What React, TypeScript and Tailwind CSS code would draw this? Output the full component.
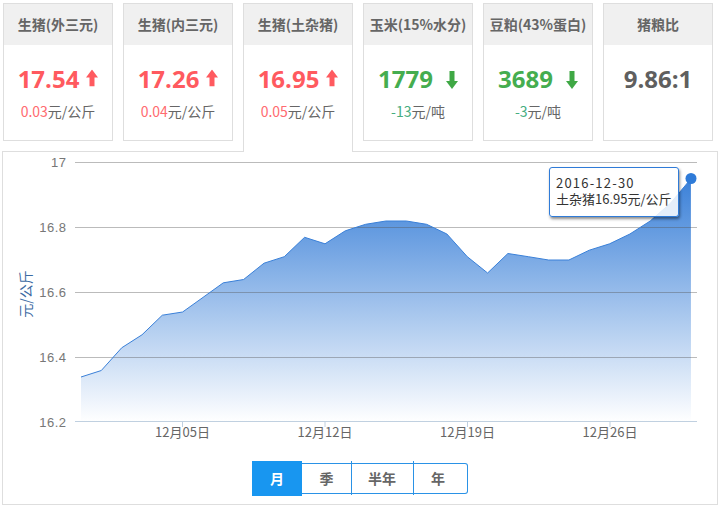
const FONT = "font-['Noto_Sans_CJK_SC','Open_Sans',sans-serif]";

const vals = [16.34,16.36,16.43,16.47,16.53,16.54,16.585,16.63,16.64,16.69,16.71,16.77,16.75,16.79,16.81,16.82,16.82,16.81,16.78,16.71,16.66,16.72,16.71,16.70,16.70,16.73,16.75,16.78,16.82,16.875,16.95];
const px = (i: number) => 81 + i * 20.33;
const py = (v: number) => 162.5 + (17 - v) * 325;
const pts = vals.map((v, i) => `${px(i).toFixed(1)},${py(v).toFixed(1)}`);
const linePath = "M" + pts.join("L");
const areaPath = linePath + `L691,422L81,422Z`;

type Card = { title: string; value: string; sub?: string; unit?: string; dir?: "up" | "down"; active?: boolean };
const cards: Card[] = [
  { title: "生猪(外三元)", value: "17.54", sub: "0.03", unit: "元/公斤", dir: "up" },
  { title: "生猪(内三元)", value: "17.26", sub: "0.04", unit: "元/公斤", dir: "up" },
  { title: "生猪(土杂猪)", value: "16.95", sub: "0.05", unit: "元/公斤", dir: "up", active: true },
  { title: "玉米(15%水分)", value: "1779", sub: "-13", unit: "元/吨", dir: "down" },
  { title: "豆粕(43%蛋白)", value: "3689", sub: "-3", unit: "元/吨", dir: "down" },
  { title: "猪粮比", value: "9.86:1" },
];

function Arrow({ dir }: { dir: "up" | "down" }) {
  return dir === "up" ? (
    <svg width="12" height="17" viewBox="0 0 12 17" className="block -translate-y-[1.5px]">
      <path d="M6 0L12 8H8.5V17H3.5V8H0Z" fill="#ff5a5f" />
    </svg>
  ) : (
    <svg width="12" height="18" viewBox="0 0 12 18" className="block translate-y-[1px]">
      <path d="M6 18L12 10H8.5V0H3.5V10H0Z" fill="#3fa845" />
    </svg>
  );
}

function StatCard({ c }: { c: Card }) {
  const color = c.dir === "up" ? "text-[#ff5a5f]" : c.dir === "down" ? "text-[#45ad4f]" : "text-[#5f5f5f]";
  const subColor = c.dir === "up" ? "text-[#ff6b70]" : "text-[#45ad7f]";
  return (
    <div
      className={`relative w-[110px] shrink-0 border border-[#dedede] bg-white ${
        c.active ? "z-10 h-[149px] border-b-0" : "h-[138px]"
      }`}
    >
      <div className="h-[41px] bg-[#f0f0f0] text-center text-[14px] leading-[41px] font-bold whitespace-nowrap text-[#666]">
        {c.title}
      </div>
      <div
        className={`mt-[16px] flex h-[36px] items-center justify-center text-[24px] leading-[36px] font-bold ${color} ${
          c.dir === "down" ? "gap-[13px]" : "gap-[7px]"
        }`}
      >
        <span className="font-['Open_Sans',sans-serif]">{c.value}</span>
        {c.dir && <Arrow dir={c.dir} />}
      </div>
      {c.sub && (
        <div className="mt-[4px] text-center text-[14px] leading-[20px] text-[#666]">
          <span className={subColor}>{c.sub}</span>
          {c.unit}
        </div>
      )}
    </div>
  );
}

const yTicks = [
  { l: "17", y: 162.5 },
  { l: "16.8", y: 227.5 },
  { l: "16.6", y: 292.5 },
  { l: "16.4", y: 357.5 },
];
const xTicks = [
  { l: "12月05日", x: 182.5 },
  { l: "12月12日", x: 325 },
  { l: "12月19日", x: 467.5 },
  { l: "12月26日", x: 610 },
];
const ranges = [
  { l: "月", w: "w-[50px]" },
  { l: "季", w: "w-[49px]" },
  { l: "半年", w: "w-[62px]" },
  { l: "年", w: "w-[55px]" },
];

export default function App() {
  return (
    <div className={`h-[511px] w-[724px] overflow-hidden bg-white pt-[3px] ${FONT}`}>
      <div className="flex h-[138px] items-start gap-[10px] pl-[3px]">
        {cards.map((c) => (
          <StatCard key={c.title} c={c} />
        ))}
      </div>
      <div className="relative mt-[10px] ml-[2px] h-[354px] w-[716px] border border-[#dedede] bg-white">
        <svg width="714" height="300" viewBox="3 152 714 300" className="block">
          <defs>
            <linearGradient id="area" x1="0" y1="178" x2="0" y2="422" gradientUnits="userSpaceOnUse">
              <stop offset="0" stopColor="#3a80d8" />
              <stop offset="1" stopColor="#ffffff" />
            </linearGradient>
          </defs>
          <path d={areaPath} fill="url(#area)" />
          {yTicks.map((t) => (
            <line key={t.l} x1="75" x2="697" y1={t.y} y2={t.y} stroke="#555" strokeOpacity="0.4" strokeWidth="1" />
          ))}
          <line x1="75" x2="697" y1="421.5" y2="421.5" stroke="#c0d0e0" strokeWidth="1" />
          {xTicks.map((t) => (
            <line key={t.l} x1={t.x} x2={t.x} y1="422" y2="427" stroke="#c0d0e0" strokeWidth="1" />
          ))}
          <path d={linePath} fill="none" stroke="#3a80d8" strokeWidth="1" />
          <circle cx="691" cy="178.5" r="5.5" fill="#2f7bd8" />
          {[...yTicks, { l: "16.2", y: 422 }].map((t) => (
            <text key={t.l} x="66.5" y={t.y + 4.5} textAnchor="end" fontSize="13" letterSpacing="0.5" fill="#777" fontFamily="'Liberation Sans',sans-serif">
              {t.l}
            </text>
          ))}
          {xTicks.map((t) => (
            <text key={t.l} x={t.x} y="437" textAnchor="middle" fontSize="13" fill="#666" fontFamily="'Noto Sans CJK SC',sans-serif">
              {t.l}
            </text>
          ))}
          <text
            transform="translate(31 294) rotate(-90)"
            textAnchor="middle"
            fontSize="14"
            fill="#3d6ba3"
            fontFamily="'Noto Sans CJK SC',sans-serif"
          >
            元/公斤
          </text>
        </svg>
        <div className="absolute top-[15px] left-[546px] h-[50px] w-[130px] rounded-[3px] border border-[#2f7bd8] bg-white/85 pt-[7px] pl-[6px] text-[13px] leading-[16px] whitespace-nowrap text-[#333] shadow-[1px_2px_3px_rgba(0,0,0,0.45)]">
          <div className="tracking-[1.2px]">2016-12-30</div>
          <div>土杂猪16.95元/公斤</div>
        </div>
        <div className="mt-[9px] ml-[249px] flex h-[35px] w-[216px] items-stretch">
          {ranges.map((r, i) => (
            <div
              key={r.l}
              className={`relative flex items-center justify-center text-[14px] font-bold ${r.w} ${
                i === 0
                  ? "bg-[#1896f0] text-white"
                  : `my-[2px] border-y border-[#2a92e6] text-[#666] ${i === 3 ? "rounded-r-[3px] border-r pr-[4px]" : ""}`
              }`}
            >
              {r.l}
              {i > 1 && <span className="absolute -top-[3px] -bottom-[2px] left-0 w-px bg-[#2a92e6]" />}
            </div>
          ))}
        </div>
      </div>
    </div>
  );
}
